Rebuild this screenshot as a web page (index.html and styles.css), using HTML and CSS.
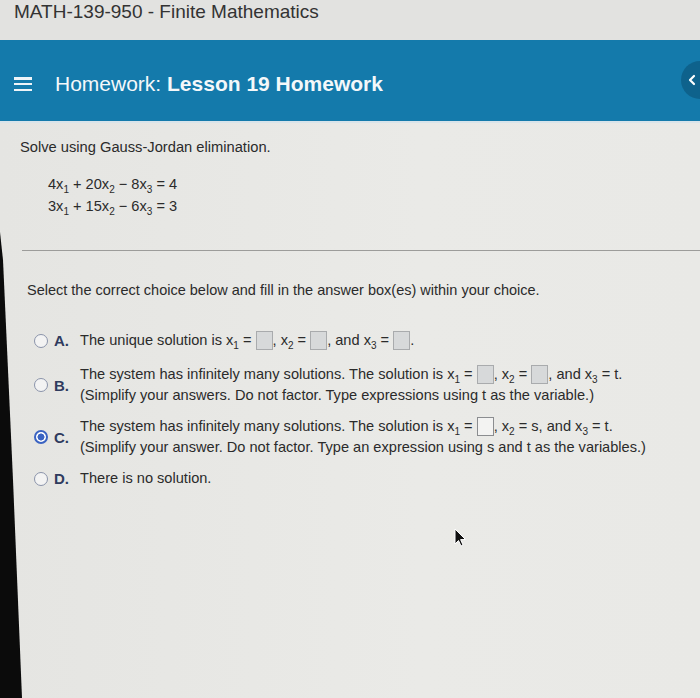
FILE: index.html
```html
<!DOCTYPE html>
<html lang="en">
<head>
<meta charset="utf-8">
<title>MATH-139-950 - Finite Mathematics</title>
<link rel="stylesheet" href="styles.css">
</head>
<body>
<div class="page">
  <div class="topbar"><span class="course">MATH-139-950 - Finite Mathematics</span></div>
  <header class="hw-header">
    <span class="burger"><i></i><i></i><i></i></span>
    <h1 class="hw-title">Homework: <b>Lesson 19 Homework</b></h1>
    <span class="side-btn"><svg width="10" height="12" viewBox="0 0 10 12"><path d="M7 2 L3 6 L7 10" fill="none" stroke="#fff" stroke-width="2.2" stroke-linecap="round" stroke-linejoin="round"/></svg></span>
  </header>

  <section class="problem">
    <p class="prompt">Solve using Gauss-Jordan elimination.</p>
    <div class="system">
      <div class="eq">4x<sub>1</sub> + 20x<sub>2</sub> − 8x<sub>3</sub> = 4</div>
      <div class="eq">3x<sub>1</sub> + 15x<sub>2</sub> − 6x<sub>3</sub> = 3</div>
    </div>
  </section>

  <hr class="divider">

  <section class="answer">
    <p class="prompt prompt--select">Select the correct choice below and fill in the answer box(es) within your choice.</p>
    <div class="options">
      <div class="opt opt--single">
        <span class="radio"></span>
        <span class="letter">A.</span>
        <div class="opt-text">
          <div class="line">The unique solution is x<sub>1</sub> = <span class="box"></span>, x<sub>2</sub> = <span class="box"></span>, and x<sub>3</sub> = <span class="box"></span>.</div>
        </div>
      </div>
      <div class="opt">
        <span class="radio"></span>
        <span class="letter">B.</span>
        <div class="opt-text">
          <div class="line">The system has infinitely many solutions. The solution is x<sub>1</sub> = <span class="box"></span>, x<sub>2</sub> = <span class="box"></span>, and x<sub>3</sub> = t.</div>
          <div class="line">(Simplify your answers. Do not factor. Type expressions using t as the variable.)</div>
        </div>
      </div>
      <div class="opt">
        <span class="radio radio--on"></span>
        <span class="letter">C.</span>
        <div class="opt-text">
          <div class="line">The system has infinitely many solutions. The solution is x<sub>1</sub> = <span class="box box--active"></span>, x<sub>2</sub> = s, and x<sub>3</sub> = t.</div>
          <div class="line">(Simplify your answer. Do not factor. Type an expression using s and t as the variables.)</div>
        </div>
      </div>
      <div class="opt">
        <span class="radio"></span>
        <span class="letter">D.</span>
        <div class="opt-text">
          <div class="line">There is no solution.</div>
        </div>
      </div>
    </div>
  </section>

  <svg class="cursor" width="14" height="20" viewBox="0 0 14 20"><path d="M1 1 L1 16 L4.5 12.5 L7 18 L9 17 L6.6 11.6 L11.5 11.5 Z" fill="#111" stroke="#fff" stroke-width="1"/></svg>
  <div class="bezel"></div>
</div>
</body>
</html>
```

FILE: styles.css
```css
* { box-sizing: border-box; }
html, body { margin: 0; padding: 0; }
body {
  background: #e8e8e5;
  font-family: "Liberation Sans", Arial, sans-serif;
  color: #2b2b2b;
}
.page {
  position: relative;
  width: 700px;
  height: 698px;
  overflow: hidden;
  background: linear-gradient(90deg, #e5e5e2 0%, #eaeae7 60%, #e9e9e6 100%);
}
.topbar {
  height: 40px;
  padding-left: 14px;
  background: #e2e2e0;
}
.course {
  font-size: 19px;
  line-height: 23px;
  color: #333;
}
.hw-header {
  position: relative;
  height: 83px;
  padding-top: 7px;
  display: flex;
  align-items: center;
  background: #147aab;
  border-bottom: 2px solid #d9e4ea;
}
.burger {
  display: flex;
  flex-direction: column;
  justify-content: space-between;
  width: 18px;
  height: 14px;
  margin-left: 14px;
}
.burger i {
  display: block;
  height: 2.5px;
  background: #eef4f8;
}
.hw-title {
  margin: 0 0 0 23px;
  font-size: 21px;
  font-weight: normal;
  color: #f4f8fa;
}
.hw-title b { font-weight: bold; }
.side-btn {
  position: absolute;
  left: 681px;
  top: 21px;
  width: 38px;
  height: 38px;
  border-radius: 50%;
  background: #0e628c;
  display: flex;
  align-items: center;
  padding-left: 6px;
}
.prompt {
  margin: 0;
  font-size: 14.7px;
  line-height: 20px;
}
.prompt--select { font-size: 14.5px; }
.problem {
  padding: 14px 0 0 20px;
}
.system {
  margin: 16px 0 0 28px;
}
.eq {
  font-size: 14.6px;
  line-height: 22px;
}
sub {
  font-size: 10px;
  vertical-align: -4px;
  line-height: 0;
}
.divider {
  margin: 33px 0 0 22px;
  border: 0;
  height: 1px;
  background: #9c9c9a;
}
.answer {
  padding: 29px 0 0 27px;
}
.options {
  margin-top: 27px;
  display: flex;
  flex-direction: column;
  gap: 10px;
}
.opt {
  display: flex;
  align-items: center;
  margin-left: 7px;
}
.opt--single { padding: 3px 0; }
.radio {
  width: 14px;
  height: 14px;
  border-radius: 50%;
  border: 1.5px solid #8a93aa;
  background: #f3f3f3;
  flex: none;
}
.radio--on {
  border: 2px solid #3a63c2;
  background: radial-gradient(circle, #3a63c2 0 3.2px, #fff 3.8px);
}
.letter {
  width: 32px;
  padding-left: 6px;
  font-size: 15px;
  font-weight: bold;
  color: #2f3b5e;
  flex: none;
}
.opt-text { font-size: 14.6px; }
.line { line-height: 21px; }
.box {
  display: inline-block;
  width: 17px;
  height: 19px;
  vertical-align: -5px;
  border: 1px solid #a9abad;
  background: #d7d9da;
}
.box--active {
  background: #f3f3f2;
  border-color: #8b8d90;
}
.cursor {
  position: absolute;
  left: 454px;
  top: 528px;
}
.bezel {
  position: absolute;
  left: 0;
  top: 0;
  width: 30px;
  height: 698px;
  background: #0b0b0b;
  clip-path: polygon(0 232px, 3px 260px, 13px 480px, 22px 698px, 0 698px);
}
```
